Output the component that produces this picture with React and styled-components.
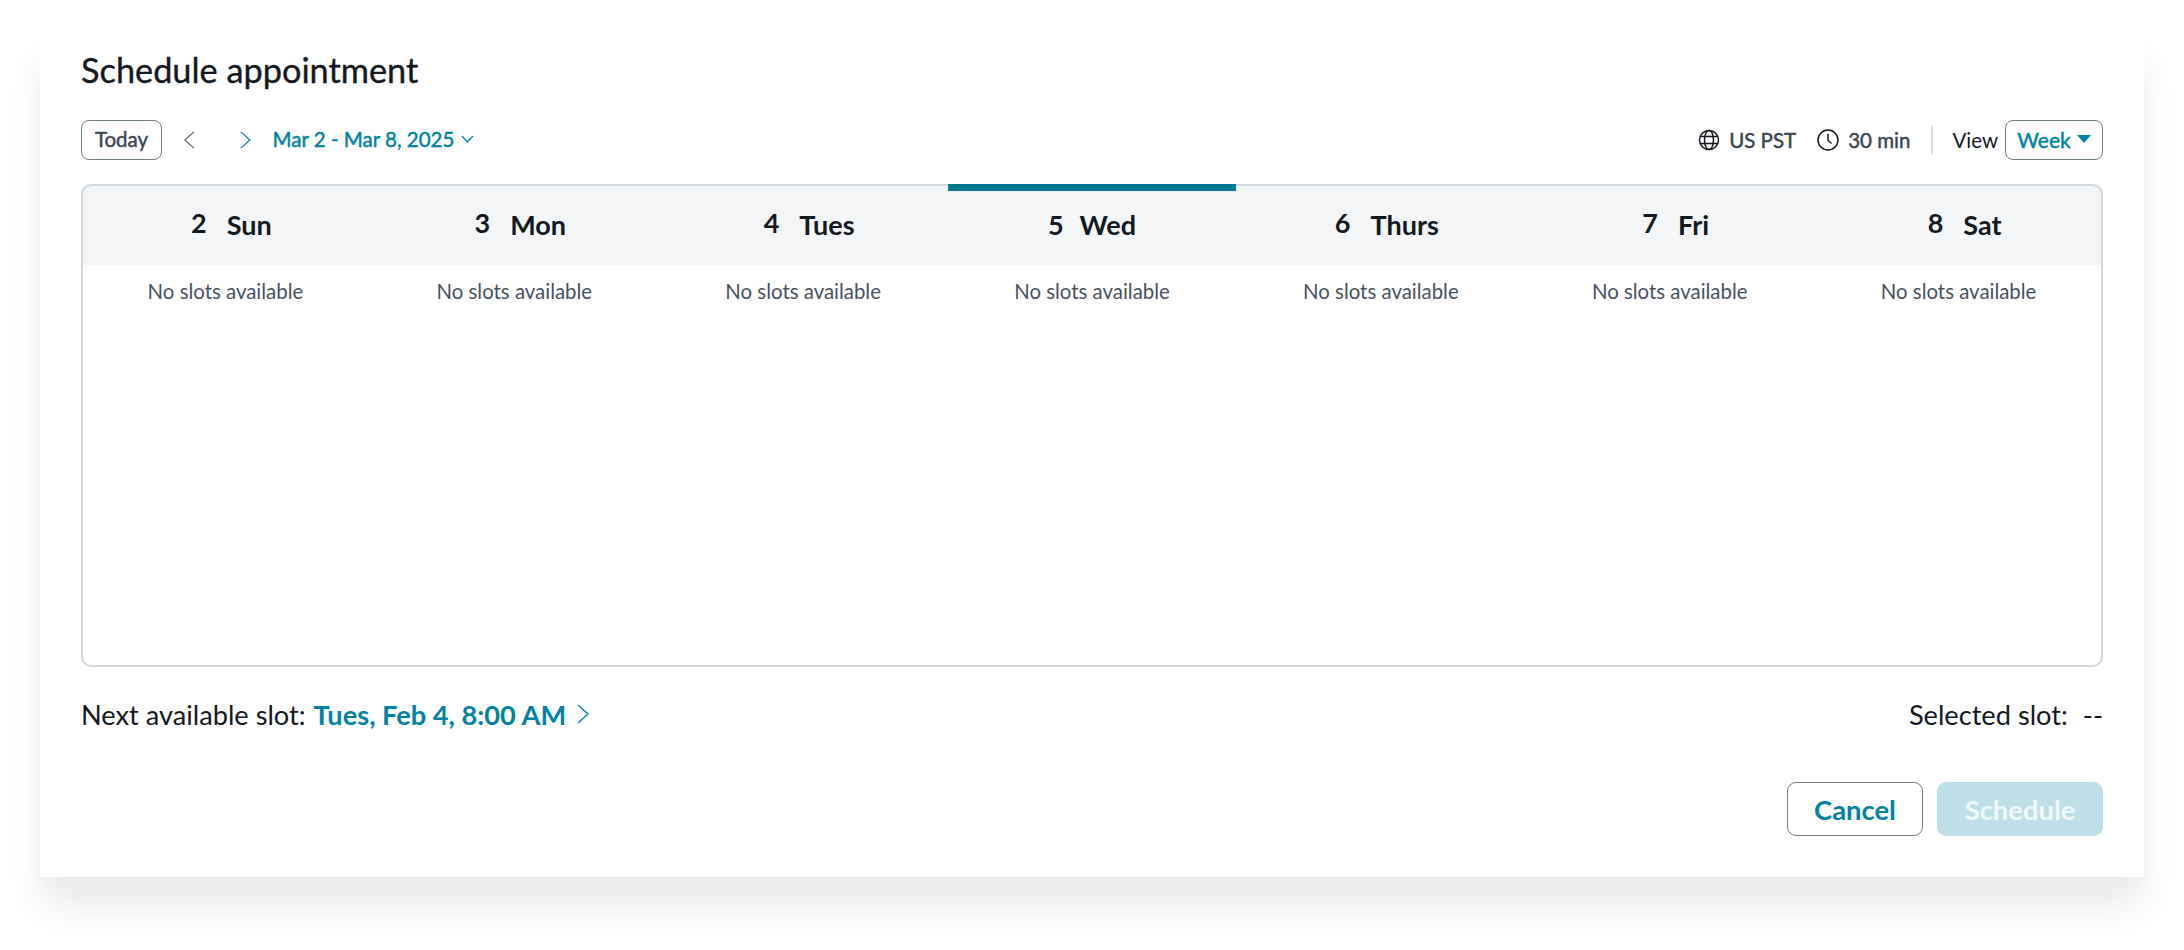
import React from "react";
import styled, { createGlobalStyle } from "styled-components";

const Global = createGlobalStyle`
  html, body { margin: 0; padding: 0; background: #fff; }
  body { font-family: Lato, "Open Sans", sans-serif; color: #14191f; }
  * { box-sizing: border-box; }
`;

const Page = styled.div`
  width: 2184px;
  height: 950px;
  padding: 30px 40px 0;
  overflow: hidden;
`;

const Card = styled.section`
  height: 847px;
  background: #fff;
  padding: 0 41px;
  box-shadow: 0 30px 36px rgba(0, 0, 0, 0.085);
  display: flex;
  flex-direction: column;
`;

const Title = styled.h1`
  margin: 0;
  height: 90px;
  padding-top: 18px;
  font-size: 34.3px;
  line-height: 44px;
  font-weight: 400;
  -webkit-text-stroke: 0.35px #14191f;
  color: #14191f;
`;

const Toolbar = styled.div`
  display: flex;
  align-items: center;
  justify-content: space-between;
  height: 40px;
`;

const Group = styled.div`
  display: flex;
  align-items: center;
`;

const OutlineButton = styled.button`
  height: 40px;
  width: ${(p) => p.$w}px;
  padding: 0 0 2px;
  background: #fff;
  border: 1.5px solid #6f7f87;
  border-radius: 8px;
  font-family: inherit;
  font-size: ${(p) => p.$size || 20.5}px;
  font-weight: 400;
  -webkit-text-stroke: 0.45px currentColor;
  color: ${(p) => p.$color || "#3a4650"};
  display: flex;
  align-items: center;
  justify-content: center;
  gap: 6px;
`;

const IconButton = styled.span`
  display: flex;
  align-items: center;
  justify-content: center;
  margin-left: ${(p) => p.$ml}px;
  color: ${(p) => p.$color};
`;

const DateLink = styled.span`
  margin-left: 22px;
  padding-bottom: 2px;
  font-size: 20.5px;
  -webkit-text-stroke: 0.45px currentColor;
  color: #0082a3;
  display: flex;
  align-items: center;
  gap: 7px;
`;

const Meta = styled.span`
  display: flex;
  align-items: center;
  gap: 9px;
  font-size: 20.5px;
  -webkit-text-stroke: 0.45px currentColor;
  color: #3a4650;
  margin-right: 21px;
`;

const Divider = styled.span`
  width: 2px;
  height: 28px;
  background: #d8dde0;
  margin-right: 19px;
`;

const ViewLabel = styled.span`
  font-size: 20.5px;
  color: #14191f;
  margin-right: 7px;
`;

const Table = styled.div`
  position: relative;
  margin-top: 24px;
  height: 483px;
  border-radius: 10px;
  display: grid;
  grid-template-columns: repeat(7, 1fr);
  grid-template-rows: 81px 1fr;

  &::after {
    content: "";
    position: absolute;
    inset: 0;
    border: 2px solid #d0d8dc;
    border-radius: 10px;
    pointer-events: none;
  }
`;

const Head = styled.div`
  position: relative;
  background: #f3f5f7;
  display: flex;
  align-items: center;
  justify-content: center;
  gap: ${(p) => (p.$active ? 16 : 20)}px;
  padding: 2px 0 2px ${(p) => (p.$active ? 0 : 12)}px;
  font-size: 27px;
  font-weight: 700;
  color: #14191f;
  border-radius: ${(p) => (p.$first ? "10px 0 0 0" : p.$last ? "0 10px 0 0" : "0")};
`;

const ActiveBar = styled.span`
  position: absolute;
  left: 0;
  right: 0;
  top: 0;
  height: 7px;
  background: #00788f;
  z-index: 1;
`;

const DayNum = styled.span`
  position: relative;
  top: ${(p) => (p.$active ? 0 : -2)}px;
`;

const Body = styled.div`
  padding-top: 14px;
  text-align: center;
  font-size: 20.4px;
  line-height: 24px;
  color: #47525f;
`;

const Footer = styled.div`
  display: flex;
  align-items: center;
  justify-content: space-between;
  margin-top: 29px;
  height: 36px;
  font-size: 27.2px;
  color: #14191f;
`;

const SlotLink = styled.span`
  margin-left: 8px;
  font-weight: 700;
  color: #0082a3;
  display: inline-flex;
  align-items: center;
  gap: 11px;
`;

const Next = styled.div`
  display: flex;
  align-items: center;
`;

const Selected = styled.div`
  display: flex;
  gap: 15px;
`;

const Actions = styled.div`
  display: flex;
  justify-content: flex-end;
  gap: 14px;
  margin-top: 50px;
`;

const ActionButton = styled.button`
  height: 54px;
  width: ${(p) => p.$w}px;
  border-radius: 9px;
  font-family: inherit;
  font-size: 27.4px;
  font-weight: 700;
  background: ${(p) => (p.$primary ? "#bfdfe8" : "#fff")};
  color: ${(p) => (p.$primary ? "#f2f9fb" : "#0082a3")};
  border: ${(p) => (p.$primary ? "none" : "1.5px solid #6f7f87")};
`;

const paths = {
  right: "M1 1l10 9-10 9",
  left: "M11 1L1 10l10 9",
};

const Chevron = ({ dir = "right", height = 18 }) => (
  <svg width={(height * 12) / 20} height={height} viewBox="0 0 12 20" fill="none" stroke="currentColor" strokeWidth="1.4">
    <path d={paths[dir]} />
  </svg>
);

const ChevronDown = () => (
  <svg width="13" height="8" viewBox="0 0 13 8" fill="none" stroke="currentColor" strokeWidth="1.3">
    <path d="M1 1l5.5 6L12 1" />
  </svg>
);

const Globe = () => (
  <svg width="22" height="22" viewBox="0 0 22 22" fill="none" stroke="#14191f" strokeWidth="1.5">
    <circle cx="11" cy="11" r="9.5" />
    <ellipse cx="11" cy="11" rx="4.5" ry="9.5" />
    <path d="M2 7.5h18M2 14.5h18" />
  </svg>
);

const Clock = () => (
  <svg width="22" height="22" viewBox="0 0 22 22" fill="none" stroke="#14191f" strokeWidth="1.5">
    <circle cx="11" cy="11" r="10" />
    <path d="M11 5v6.5l3.5 3" />
  </svg>
);

const Caret = () => (
  <svg width="14" height="8" viewBox="0 0 14 8">
    <path d="M0 0h14L7 8z" fill="#0082a3" stroke="none" />
  </svg>
);

const days = [
  [2, "Sun"],
  [3, "Mon"],
  [4, "Tues"],
  [5, "Wed"],
  [6, "Thurs"],
  [7, "Fri"],
  [8, "Sat"],
];

export default function App() {
  return (
    <Page>
      <Global />
      <Card>
        <Title>Schedule appointment</Title>
        <Toolbar>
          <Group>
            <OutlineButton $w={81}>Today</OutlineButton>
            <IconButton $ml={22} $color="#5a6670"><Chevron dir="left" /></IconButton>
            <IconButton $ml={45} $color="#0082a3"><Chevron dir="right" /></IconButton>
            <DateLink>Mar 2 - Mar 8, 2025 <ChevronDown /></DateLink>
          </Group>
          <Group>
            <Meta><Globe /> US PST</Meta>
            <Meta><Clock /> 30 min</Meta>
            <Divider />
            <ViewLabel>View</ViewLabel>
            <OutlineButton $color="#0082a3" $w={98} $size={21}>Week <Caret /></OutlineButton>
          </Group>
        </Toolbar>
        <Table>
          {days.map(([n, d], i) => (
            <Head key={d} $active={n === 5} $first={i === 0} $last={i === 6}>
              {n === 5 && <ActiveBar />}
              <DayNum $active={n === 5}>{n}</DayNum>
              <span>{d}</span>
            </Head>
          ))}
          {days.map(([n]) => (
            <Body key={n}>No slots available</Body>
          ))}
        </Table>
        <Footer>
          <Next>
            Next available slot:
            <SlotLink>Tues, Feb 4, 8:00 AM <Chevron height={20} /></SlotLink>
          </Next>
          <Selected><span>Selected slot:</span><span>--</span></Selected>
        </Footer>
        <Actions>
          <ActionButton $w={136}>Cancel</ActionButton>
          <ActionButton $w={166} $primary>Schedule</ActionButton>
        </Actions>
      </Card>
    </Page>
  );
}
